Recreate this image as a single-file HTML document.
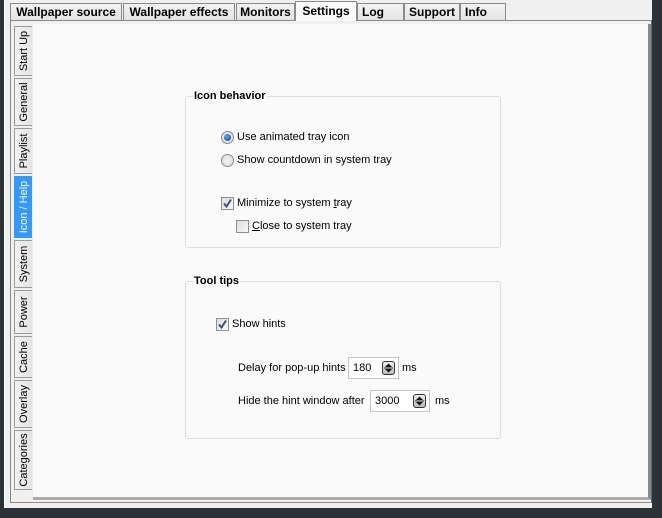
<!DOCTYPE html>
<html><head><meta charset="utf-8"><style>
*{margin:0;padding:0;box-sizing:border-box}
body{width:662px;height:518px;background:#2b3238;position:relative;overflow:hidden;font-family:"Liberation Sans",sans-serif;font-size:11px;color:#000}
.win{position:absolute;left:4px;top:0;width:648px;height:508px;background:#f0f0f0;border-left:1px solid #fff}
.a{position:absolute}
.tab{position:absolute;top:3px;height:17px;background:linear-gradient(#f2f2f2,#e3e3e3);border:1px solid #8a8a8a;border-bottom:none;font-weight:bold;font-size:12px;line-height:16px;text-align:center}
.vt{position:absolute;left:14px;width:18px;background:linear-gradient(90deg,#f2f2f2,#e4e4e4);border:1px solid #9a9a9a;border-right:none}
.vt span{position:absolute;left:50%;top:50%;transform:translate(-50%,-50%) rotate(-90deg);white-space:nowrap;font-size:11px}
.grp{position:absolute;border:1px solid #d5dfe5;border-radius:3px}
.gt{position:absolute;top:-7px;left:7px;background:#fafafa;padding:0 1px;font-weight:bold;font-size:11px}
.rb{position:absolute;width:13px;height:13px;border-radius:50%;border:1px solid #8a8a8a;background:radial-gradient(#f4f4f4,#d8d8d8)}
.cb{position:absolute;width:13px;height:13px;border:1px solid #8e8f8f;background:linear-gradient(135deg,#dcdcdc,#fafafa)}
.ed{position:absolute;height:22px;border:1px solid #c5c5c5;background:#fff;padding:4px 0 0 4px}
.sp{position:absolute;right:3px;top:3px;width:13px;height:14px;border:1px solid #333;border-radius:3px;background:linear-gradient(#eee,#bbb)}
</style></head><body>
<div class="win">
 <div class="a" style="left:5px;top:20px;width:642px;height:483px;border:1px solid #8a8a8a;border-right-color:#666;background:#f0f0f0"></div>
 <div class="a" style="left:28px;top:24px;width:618px;height:476px;background:#fafafa;border-right:3px solid #888;border-bottom:3px solid #aaa"></div>
</div>
<div class="tab" style="left:10px;width:112px">Wallpaper source</div>
<div class="tab" style="left:123px;width:112px">Wallpaper effects</div>
<div class="tab" style="left:236px;width:59px">Monitors</div>
<div class="tab" style="left:295px;top:1px;height:20px;width:62px;background:#fafafa;line-height:18px">Settings</div>
<div class="tab" style="left:357px;width:47px;text-align:left;padding-left:4px">Log</div>
<div class="tab" style="left:404px;width:56px">Support</div>
<div class="tab" style="left:460px;width:46px;text-align:left;padding-left:4px">Info</div>

<div class="vt" style="top:26px;height:50px"><span>Start Up</span></div>
<div class="vt" style="top:78px;height:48px"><span>General</span></div>
<div class="vt" style="top:128px;height:46px"><span>Playlist</span></div>
<div class="vt" style="top:176px;height:62px;background:#3399ff;border-color:#3399ff;color:#fff"><span>Icon / Help</span></div>
<div class="vt" style="top:240px;height:48px"><span>System</span></div>
<div class="vt" style="top:290px;height:44px"><span>Power</span></div>
<div class="vt" style="top:336px;height:42px"><span>Cache</span></div>
<div class="vt" style="top:380px;height:48px"><span>Overlay</span></div>
<div class="vt" style="top:430px;height:60px"><span>Categories</span></div>

<div class="grp" style="left:185px;top:96px;width:316px;height:152px"><div class="gt">Icon behavior</div></div>
<div class="rb" style="left:221px;top:131px"><div style="position:absolute;left:2px;top:2px;width:7px;height:7px;border-radius:50%;background:radial-gradient(circle at 40% 35%,#5ab0ff,#0a3c8c)"></div></div>
<div class="a" style="left:237px;top:131px">Use animated tray icon</div>
<div class="rb" style="left:221px;top:154px"></div>
<div class="a" style="left:237px;top:154px">Show countdown in system tray</div>
<div class="cb" style="left:221px;top:197px"><svg width="11" height="11" style="position:absolute;left:0;top:0"><path d="M2 5.5 L4.5 8.5 L9 1.5" stroke="#3a4f8c" stroke-width="2" fill="none"/></svg></div>
<div class="a" style="left:237px;top:197px">Minimize to system <u>t</u>ray</div>
<div class="cb" style="left:236px;top:220px"></div>
<div class="a" style="left:252px;top:220px"><u>C</u>lose to system tray</div>

<div class="grp" style="left:185px;top:281px;width:316px;height:158px"><div class="gt">Tool tips</div></div>
<div class="cb" style="left:216px;top:318px"><svg width="11" height="11" style="position:absolute;left:0;top:0"><path d="M2 5.5 L4.5 8.5 L9 1.5" stroke="#3a4f8c" stroke-width="2" fill="none"/></svg></div>
<div class="a" style="left:232px;top:318px">Show hints</div>
<div class="a" style="left:238px;top:362px">Delay for pop-up hints</div>
<div class="ed" style="left:348px;top:357px;width:51px">180<div class="sp"><svg width="11" height="12" style="position:absolute;left:0;top:0"><path d="M2 5 L5.5 1.5 L9 5Z M2 7 L5.5 10.5 L9 7Z" fill="#111"/><path d="M1 6 H10" stroke="#333" stroke-width="1"/></svg></div></div>
<div class="a" style="left:402px;top:362px">ms</div>
<div class="a" style="left:238px;top:395px">Hide the hint window after</div>
<div class="ed" style="left:370px;top:390px;width:60px">3000<div class="sp"><svg width="11" height="12" style="position:absolute;left:0;top:0"><path d="M2 5 L5.5 1.5 L9 5Z M2 7 L5.5 10.5 L9 7Z" fill="#111"/><path d="M1 6 H10" stroke="#333" stroke-width="1"/></svg></div></div>
<div class="a" style="left:435px;top:395px">ms</div>
</body></html>
